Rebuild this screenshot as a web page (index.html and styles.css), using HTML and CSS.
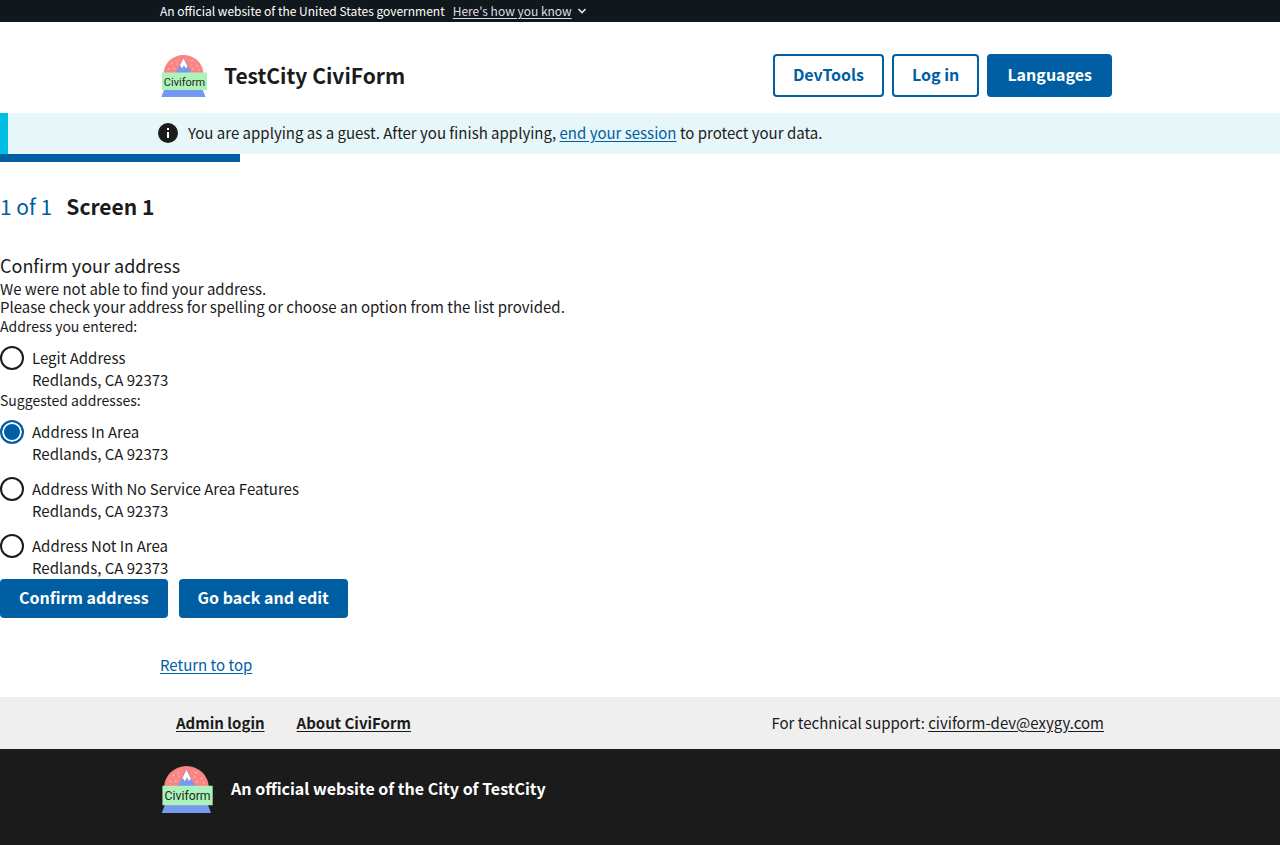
FILE: index.html
```html
<!DOCTYPE html>
<html lang="en">
<head>
<meta charset="utf-8">
<title>TestCity CiviForm</title>
<link rel="stylesheet" href="styles.css">
</head>
<body id="top">
<div class="gov-banner">
  <div class="container gov-inner">
    <span>An official website of the United States government</span>
    <button type="button" class="gov-toggle"><span>Here's how you know</span><svg viewBox="0 0 8 6" width="8" height="6" aria-hidden="true"><path d="M.5 1 4 4.500 7.500 1" fill="none" stroke="currentColor" stroke-width="1.600"/></svg></button>
  </div>
</div>
<header class="container header">
  <div class="brand">
    <svg class="logo" viewBox="0 0 48 43" role="img" aria-label="Civiform logo">
      <path d="M3.500 20a20 19 0 0 1 40 0z" fill="#fb8585"/>
      <path d="M15 20 23.500 4 32 20z" fill="#7698f0"/>
      <path d="M23.500 4 27.800 12.500 25.500 14.500 24 11.500 22 15 20.500 12 19 13z" fill="#fff" stroke="#9a8593" stroke-width=".4"/>
      <g fill="#fff" opacity=".75"><circle cx="16" cy="7" r=".6"/><circle cx="12" cy="9.500" r=".7"/><circle cx="17" cy="10" r=".6"/><circle cx="9" cy="15" r=".7"/><circle cx="14" cy="14.500" r=".7"/><circle cx="32" cy="7" r=".7"/><circle cx="31" cy="11" r=".6"/><circle cx="37" cy="12" r=".7"/><circle cx="33" cy="15" r=".7"/><circle cx="39" cy="16" r=".6"/></g>
      <path d="M4.500 35H42.500L45.500 43H1.300z" fill="#7698f0"/>
      <path d="M2 18.500H47V36H2z" fill="#adf2bb"/>
      <text x="24.500" y="31.800" text-anchor="middle" class="logo-text">Civiform</text>
    </svg>
    <span class="brand-name">TestCity CiviForm</span>
  </div>
  <nav class="header-nav">
    <button type="button" class="button button-outline">DevTools</button>
    <button type="button" class="button button-outline">Log in</button>
    <button type="button" class="button">Languages</button>
  </nav>
</header>
<section class="alert">
  <div class="container alert-inner">
    <svg class="info" viewBox="0 0 20 20" aria-hidden="true"><circle cx="10" cy="10" r="10" fill="#1b1b1b"/><path d="M9 5h2v2H9zM9 9h2v6H9z" fill="#fff"/></svg>
    <p>You are applying as a guest. After you finish applying, <a href="#">end your session</a> to protect your data.</p>
  </div>
</section>
<main>
  <div class="step-bar"></div>
  <h1 class="step"><span class="step-count">1 of 1</span><span>Screen 1</span></h1>
  <form>
    <h2>Confirm your address</h2>
    <p class="note">We were not able to find your address.</p>
    <p class="note">Please check your address for spelling or choose an option from the list provided.</p>
    <fieldset>
      <legend>Address you entered:</legend>
      <label class="choice"><input type="radio" name="address"><span>Legit Address<br>Redlands, CA 92373</span></label>
    </fieldset>
    <fieldset>
      <legend>Suggested addresses:</legend>
      <div class="choices">
        <label class="choice"><input type="radio" name="address" checked><span>Address In Area<br>Redlands, CA 92373</span></label>
        <label class="choice"><input type="radio" name="address"><span>Address With No Service Area Features<br>Redlands, CA 92373</span></label>
        <label class="choice"><input type="radio" name="address"><span>Address Not In Area<br>Redlands, CA 92373</span></label>
      </div>
    </fieldset>
    <div class="actions">
      <button type="submit" class="button button-form">Confirm address</button>
      <button type="button" class="button button-form">Go back and edit</button>
    </div>
  </form>
</main>
<footer>
  <div class="container return"><a href="#top">Return to top</a></div>
  <div class="footer-links">
    <div class="container footer-row">
      <nav><a href="#">Admin login</a><a href="#">About CiviForm</a></nav>
      <p>For technical support: <a href="mailto:civiform-dev@exygy.com">civiform-dev@exygy.com</a></p>
    </div>
  </div>
  <div class="footer-agency">
    <div class="container agency-row">
      <svg class="logo logo-large" viewBox="0 0 48 43" role="img" aria-label="Civiform logo">
        <path d="M3.500 20a20 19 0 0 1 40 0z" fill="#fb8585"/>
        <path d="M15 20 23.500 4 32 20z" fill="#7698f0"/>
        <path d="M23.500 4 27.800 12.500 25.500 14.500 24 11.500 22 15 20.500 12 19 13z" fill="#fff" stroke="#9a8593" stroke-width=".4"/>
        <g fill="#fff" opacity=".75"><circle cx="16" cy="7" r=".6"/><circle cx="12" cy="9.500" r=".7"/><circle cx="17" cy="10" r=".6"/><circle cx="9" cy="15" r=".7"/><circle cx="14" cy="14.500" r=".7"/><circle cx="32" cy="7" r=".7"/><circle cx="31" cy="11" r=".6"/><circle cx="37" cy="12" r=".7"/><circle cx="33" cy="15" r=".7"/><circle cx="39" cy="16" r=".6"/></g>
        <path d="M4.500 35H42.500L45.500 43H1.300z" fill="#7698f0"/>
        <path d="M2 18.500H47V36H2z" fill="#adf2bb"/>
        <text x="24.500" y="31.800" text-anchor="middle" class="logo-text">Civiform</text>
      </svg>
      <p>An official website of the City of TestCity</p>
    </div>
  </div>
</footer>
</body>
</html>
```
FILE: styles.css
```css
* { box-sizing: border-box; }
body {
  margin: 0;
  min-height: 100vh;
  display: flex;
  flex-direction: column;
  background: #fff;
  color: #1b1b1b;
  font-family: "Noto Sans CJK SC", "Open Sans", sans-serif;
  font-size: 15px;
  line-height: 22px;
}
p, h1, h2 { margin: 0; }
a { color: #005ea2; text-underline-offset: 2px; }
button { font: inherit; cursor: pointer; }
.container { width: 100%; max-width: 1024px; margin: 0 auto; padding: 0 32px; }

.gov-banner { background: #11181d; color: #fff; font-size: 12px; }
.gov-inner { display: flex; gap: 8px; }
.gov-toggle {
  display: flex;
  align-items: center;
  gap: 6px;
  padding: 0;
  border: 0;
  background: none;
  color: #dcdee0;
}
.gov-toggle span { text-decoration: underline; text-underline-offset: 2px; }

.header {
  display: flex;
  justify-content: space-between;
  align-items: center;
  padding-top: 32px;
  padding-bottom: 16px;
}
.brand { display: flex; align-items: center; gap: 16px; }
.brand-name { font-size: 21px; font-weight: 700; line-height: 28px; padding-bottom: 2px; }
.logo { width: 48px; height: 43px; flex: none; }
.logo-large { width: 54px; height: 48px; }
.logo-text { font-family: Roboto, sans-serif; font-size: 11px; font-weight: 400; fill: #1b2b20; }
.header-nav { display: flex; gap: 8px; padding-right: 8px; }
.button {
  padding: 9px 20px 12px;
  border: 0;
  border-radius: 4px;
  background: #005ea2;
  color: #fff;
  font-size: 16px;
  font-weight: 700;
}
.button-outline { padding: 7px 18px 10px; border: 2px solid #005ea2; background: #fff; color: #005ea2; }
.button-form { padding: 7px 19px 10px; }

.alert { border-left: 8px solid #00bde3; background: #e7f6f8; }
.alert-inner { display: flex; align-items: center; gap: 10px; padding: 9px 32px 10px 26px; }
.info { width: 20px; height: 20px; flex: none; }

.step-bar { width: 240px; max-width: 100%; height: 8px; background: #005ea2; }
.step { display: flex; gap: 14px; padding: 30px 0 33px; font-size: 21px; line-height: 28px; }
.step-count { color: #005ea2; font-weight: 400; }
h2 { margin-bottom: 3px; font-size: 18px; font-weight: 400; line-height: 24px; }
.note { line-height: 18px; }
.note + fieldset { margin-top: 1px; }
fieldset { min-width: 0; margin: 0; padding: 0; border: 0; }
legend { padding: 0 0 12px; font-size: 14px; line-height: 18px; }
.choices { display: grid; gap: 13px; }
.choice { display: flex; gap: 8px; }
.choice input {
  appearance: none;
  flex: none;
  width: 24px;
  height: 24px;
  margin: -1px 0 0;
  border: 2px solid #1b1b1b;
  border-radius: 50%;
  background: #fff;
}
.choice input:checked { border-color: #005ea2; background: #005ea2; box-shadow: inset 0 0 0 2px #fff; }
.actions { display: flex; gap: 11px; }

footer { flex: 1; display: flex; flex-direction: column; }
.return { padding-top: 36px; padding-bottom: 21px; }
.footer-links { background: #efefef; }
.footer-links a { color: #1b1b1b; }
.footer-row { display: flex; justify-content: space-between; align-items: center; padding: 15px 48px; }
.footer-row nav { display: flex; gap: 32px; font-weight: 700; }
.footer-agency { flex: 1; background: #1b1b1b; color: #fff; font-size: 16px; font-weight: 700; }
.agency-row { display: flex; align-items: center; gap: 17px; padding-top: 16px; padding-bottom: 32px; }
.agency-row p { padding-bottom: 2px; }
```
